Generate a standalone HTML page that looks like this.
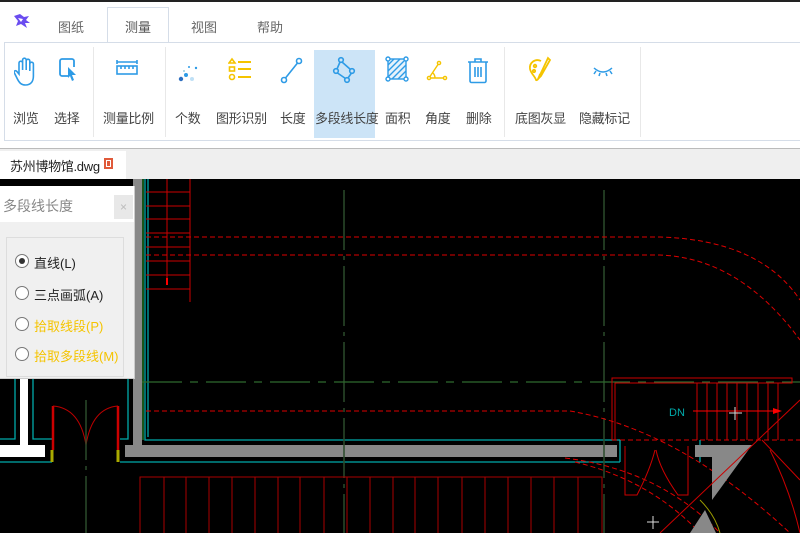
<!DOCTYPE html>
<html><head><meta charset="utf-8"><style>
*{margin:0;padding:0;box-sizing:border-box}
body{width:800px;height:533px;overflow:hidden;background:#fff;font-family:"Liberation Sans","Noto Sans CJK SC",sans-serif;position:relative}
.abs{position:absolute}
.tab{position:absolute;top:17px;font-size:13px;color:#666;width:60px;text-align:center}
.lbl{position:absolute;top:108px;font-size:13px;color:#444;text-align:center;white-space:nowrap;letter-spacing:-0.3px}
.sep{position:absolute;top:47px;width:1px;height:90px;background:#e8e8e8}
.ic{position:absolute;top:55px}
.rad{position:absolute;left:15px;width:14px;height:14px;border:1px solid #777;border-radius:50%;background:#fff}
.rt{position:absolute;left:34px;font-size:13px}
</style></head><body>
<div class="abs" style="left:0;top:0;width:800px;height:2px;background:#222"></div>
<svg class="abs" style="left:12px;top:13px" width="20" height="18" viewBox="0 0 20 18"><path d="M2 3 L8 1 L12 4 L17 3 L14 7 L18 10 L13 10 L15 15 L9 11 L4 13 L6 8 Z" fill="#6a4cf0"/><path d="M6 5 L11 6 L9 9 Z" fill="#fff"/></svg>
<div class="tab" style="left:41px">图纸</div>
<div class="abs" style="left:107px;top:7px;width:62px;height:36px;border:1px solid #d5dde8;border-bottom:none;background:#fff"></div>
<div class="tab" style="left:108px;color:#555">测量</div>
<div class="tab" style="left:174px">视图</div>
<div class="tab" style="left:240px">帮助</div>
<div class="abs" style="left:4px;top:42px;width:796px;height:99px;border-top:1px solid #d5dde8;border-bottom:1px solid #d5dde8;border-left:1px solid #d5dde8;background:#fff"></div>
<div class="abs" style="left:314px;top:50px;width:61px;height:88px;background:#cce4f7"></div>
<div class="sep" style="left:93px"></div><div class="sep" style="left:165px"></div><div class="sep" style="left:504px"></div><div class="sep" style="left:640px"></div>
<svg class="ic" style="left:14px;top:56px" width="24" height="32" viewBox="0 0 24 32" fill="none" stroke="#2e9be6" stroke-width="1.6"><path d="M5 18 V7 a1.8 1.8 0 0 1 3.6 0 V14 V4 a1.8 1.8 0 0 1 3.6 0 V14 V5 a1.8 1.8 0 0 1 3.6 0 V15 V8 a1.8 1.8 0 0 1 3.6 0 V20 c0 6 -3 9 -8 9 c-4 0 -6 -2 -8 -6 l-3 -6 c-1 -2 1 -3 2.5 -1.5 Z"/></svg>
<svg class="ic" style="left:57px" width="22" height="30" viewBox="0 0 22 30" fill="none" stroke="#2e9be6" stroke-width="1.8"><path d="M12 21 H5 a2 2 0 0 1 -2 -2 V6 a2 2 0 0 1 2 -2 H15 a2 2 0 0 1 2 2 V12"/><path d="M11 12 L19 20 L15 20 L17 25 L15 26 L13 21 L11 23 Z" fill="#2e9be6" stroke="none"/></svg>
<svg class="ic" style="left:115px" width="24" height="30" viewBox="0 0 24 30" fill="none" stroke="#2e9be6" stroke-width="1.6"><path d="M2 5 V9 M22 5 V9 M2 7 H22"/><rect x="2" y="11" width="20" height="8"/><path d="M6 11 V14 M10 11 V14 M14 11 V14 M18 11 V14"/></svg>
<svg class="ic" style="left:176px" width="24" height="30" viewBox="0 0 24 30"><circle cx="5" cy="24" r="2.2" fill="#2e6fc0"/><circle cx="10" cy="20" r="2" fill="#2e9be6"/><circle cx="13" cy="12" r="1" fill="#2e9be6"/><circle cx="20" cy="13" r="1.2" fill="#2e9be6"/><circle cx="16" cy="24" r="2" fill="#bfe0f6"/><circle cx="8" cy="16" r="1" fill="#9cd"/></svg>
<svg class="ic" style="left:228px" width="24" height="30" viewBox="0 0 24 30" fill="none" stroke="#f5c400" stroke-width="1.6"><path d="M4 4 L7 8 H1 Z"/><rect x="1.5" y="12" width="5" height="4"/><circle cx="4" cy="22" r="2.5"/><path d="M10 7 H23 M10 14 H23 M10 22 H23" stroke-width="2"/></svg>
<svg class="ic" style="left:280px" width="24" height="30" viewBox="0 0 24 30" fill="none" stroke="#2e9be6" stroke-width="1.6"><circle cx="19" cy="6" r="2.5"/><circle cx="4" cy="25" r="2.5"/><path d="M17.5 8 L5.5 23"/></svg>
<svg class="ic" style="left:332px" width="24" height="30" viewBox="0 0 24 30" fill="none" stroke="#2e9be6" stroke-width="1.6"><circle cx="9" cy="5" r="2.3"/><circle cx="4" cy="16" r="2.3"/><circle cx="20" cy="16" r="2.3"/><circle cx="15" cy="25" r="2.3"/><path d="M8 7 L5 14 M5.5 18 L13.5 23.5 M16 23 L19.5 18 M10 7 L18.5 14.5"/></svg>
<svg class="ic" style="left:385px" width="24" height="30" viewBox="0 0 24 30" fill="none" stroke="#2e9be6" stroke-width="1.4"><rect x="3" y="4" width="18" height="20" fill="#e6f2fb"/><path d="M3 10 L9 4 M3 16 L15 4 M3 22 L21 4 M7 24 L21 10 M13 24 L21 16"/><circle cx="3" cy="4" r="2" fill="#fff"/><circle cx="21" cy="4" r="2" fill="#fff"/><circle cx="3" cy="24" r="2" fill="#fff"/><circle cx="21" cy="24" r="2" fill="#fff"/></svg>
<svg class="ic" style="left:425px" width="24" height="30" viewBox="0 0 24 30" fill="none" stroke="#f5c400" stroke-width="1.4"><circle cx="14" cy="8" r="1.6"/><circle cx="4" cy="23" r="1.6"/><circle cx="20" cy="23" r="1.6"/><path d="M13 9.5 L5 21.5 M5.5 23 H18.5 M8 18 Q10 20 10 23"/></svg>
<svg class="ic" style="left:466px" width="24" height="30" viewBox="0 0 24 30" fill="none" stroke="#2e9be6" stroke-width="1.6"><path d="M2 7 H22 M9 7 V4 H15 V7"/><path d="M4 7 V26 a1.5 1.5 0 0 0 1.5 1.5 H18.5 A1.5 1.5 0 0 0 20 26 V7"/><path d="M9 12 V22 M12 12 V22 M15 12 V22"/></svg>
<svg class="ic" style="left:527px" width="26" height="30" viewBox="0 0 26 30" fill="none" stroke="#f5c400" stroke-width="1.8"><path d="M14 6 C8 3 2 8 3 14 C4 19 8 21 9 25 C11 26 12 22 13 19"/><circle cx="8" cy="11" r="1.3"/><circle cx="7" cy="16" r="1.2"/><path d="M21 3 L13 20 L11 24 L14 21 L23 5 Z"/></svg>
<svg class="ic" style="left:590px" width="26" height="30" viewBox="0 0 26 30" fill="none" stroke="#2e9be6" stroke-width="1.5"><path d="M4 13 Q13 21 22 13 M6 16 L4 19 M10 18 L9 21 M16 18 L17 21 M20 16 L22 19"/></svg>
<div class="lbl" style="left:13px">浏览</div>
<div class="lbl" style="left:54px">选择</div>
<div class="lbl" style="left:103px">测量比例</div>
<div class="lbl" style="left:175px">个数</div>
<div class="lbl" style="left:216px">图形识别</div>
<div class="lbl" style="left:280px">长度</div>
<div class="lbl" style="left:315px">多段线长度</div>
<div class="lbl" style="left:385px">面积</div>
<div class="lbl" style="left:425px">角度</div>
<div class="lbl" style="left:466px">删除</div>
<div class="lbl" style="left:515px">底图灰显</div>
<div class="lbl" style="left:579px">隐藏标记</div>
<div class="abs" style="left:0;top:148px;width:800px;height:31px;background:#efefef;border-top:1px solid #bbb"></div>
<div class="abs" style="left:0;top:151px;width:126px;height:28px;background:#fff"></div>
<div class="abs" style="left:10px;top:156px;font-size:13px;color:#222;letter-spacing:-0.3px">苏州博物馆.dwg</div>
<div class="abs" style="left:104px;top:158px;width:9px;height:11px;background:#e05a3a;border:2px solid #e05a3a;box-shadow:inset 0 0 0 1px #fff"></div>
<svg class="abs" style="left:0;top:0" width="800" height="533" viewBox="0 0 800 533">
<rect x="0" y="179" width="800" height="354" fill="#000"/>
<g fill="none">
<path d="M15 378 V439 H0 M33 378 V439 H52 M0 462 H52 M128 378 V439 H120 M120 462 H620 M145 179 V440 H620 M148 179 V437" stroke="#0aa" stroke-width="1.3"/>
<path d="M143 179 V440" stroke="#3a3" stroke-width="1"/>
<rect x="20" y="378" width="8" height="70" fill="#fff"/>
<rect x="0" y="445" width="45" height="12" fill="#fff"/>
<rect x="133" y="179" width="9" height="272" fill="#888"/>
<rect x="125" y="445" width="492" height="12" fill="#888"/>
<path d="M53 406 V450 M118 406 V450" stroke="#c00" stroke-width="2.5"/>
<path d="M53 406 Q80 408 86 445 M118 406 Q92 408 86 445" stroke="#b00" stroke-width="1"/>
<path d="M52 450 V462 M118 450 V462" stroke="#aa0" stroke-width="3"/>
<path d="M86 400 V533 M344 190 V533 M604 190 V533" stroke="#2a4a2a" stroke-width="1.5" stroke-dasharray="60 6 4 6"/>
<path d="M142 382 H800" stroke="#2f6a2f" stroke-width="1.2" stroke-dasharray="40 8 8 8"/>
<path d="M146 192 H190 M146 206 H190 M146 219 H190 M146 233 H190 M146 247 H190 M146 261 H190 M146 275 H190 M146 289 H190 M190 179 V302 M167 179 V280" stroke="#c00" stroke-width="1"/>
<path d="M167 278 V285" stroke="#f00" stroke-width="2"/>
<path d="M146 237 H660 Q760 240 800 300 M146 255 H660 Q740 258 800 340 M146 411 H570 Q680 430 790 533 M565 458 Q660 470 720 533 M575 462 Q650 480 700 533 M612 440 H800" stroke="#d00" stroke-width="1" stroke-dasharray="5 3"/>
<path d="M140 533 V477 H602 V533 M164 477 V533 M186 477 V533 M209 477 V533 M232 477 V533 M255 477 V533 M278 477 V533 M300 477 V533 M324 477 V533 M347 477 V533 M370 477 V533 M393 477 V533 M415 477 V533 M438 477 V533 M462 477 V533 M485 477 V533 M508 477 V533 M531 477 V533 M554 477 V533 M578 477 V533" stroke="#a00" stroke-width="1"/>
<path d="M612 440 V378 H792 V383 H615 V440 M697 383 V440 M707 383 V440 M717 383 V440 M727 383 V440 M737 383 V440 M747 383 V440 M758 383 V440 M768 383 V440 M778 383 V440" stroke="#c00" stroke-width="1"/>
<path d="M693 411 H778" stroke="#f00" stroke-width="1"/><path d="M773 408 L782 411 L773 414 Z" fill="#f00"/>
<path d="M625 446 V495 H637 Q650 470 655 450 M688 446 V495 H678 Q660 470 656 450" stroke="#c00" stroke-width="1"/>
<path d="M620 440 V462 M700 440 V462" stroke="#0aa" stroke-width="1.3"/>
<path d="M695 445 H752 L712 500 V457 H695 Z" fill="#888"/>
<path d="M690 533 L705 510 L716 533 Z" fill="#888"/>
<path d="M660 533 L800 400 M762 440 L800 480 M770 450 Q790 490 800 533" stroke="#c00" stroke-width="1"/>
<path d="M700 500 Q715 515 720 533" stroke="#990" stroke-width="1"/>
<path d="M729 413 H742 M735 407 V420 M647 522 H659 M653 516 V529" stroke="#ddd" stroke-width="1"/>
</g>
<text x="669" y="416" fill="#0aa" font-size="11" font-family="Liberation Sans">DN</text>
</svg>
<div class="abs" style="left:0;top:186px;width:135px;height:193px;background:#f0f0f0;border-right:1px solid #ccc;border-bottom:1px solid #ccc"></div>
<div class="abs" style="left:0;top:186px;width:134px;height:36px;background:#fff"></div>
<div class="abs" style="left:3px;top:196px;font-size:14px;color:#888">多段线长度</div>
<div class="abs" style="left:114px;top:195px;width:19px;height:24px;background:#e8e8e8;color:#bbb;font-size:12px;text-align:center;line-height:24px">×</div>
<div class="abs" style="left:6px;top:237px;width:118px;height:140px;border:1px solid #ddd"></div>
<div class="rad" style="top:254px"><div style="width:6px;height:6px;background:#333;border-radius:50%;margin:3px"></div></div>
<div class="rt" style="top:253px;color:#222">直线(L)</div>
<div class="rad" style="top:286px"></div><div class="rt" style="top:285px;color:#222">三点画弧(A)</div>
<div class="rad" style="top:317px"></div><div class="rt" style="top:316px;color:#f5c400">拾取线段(P)</div>
<div class="rad" style="top:347px"></div><div class="rt" style="top:346px;color:#f5c400">拾取多段线(M)</div>
</body></html>
